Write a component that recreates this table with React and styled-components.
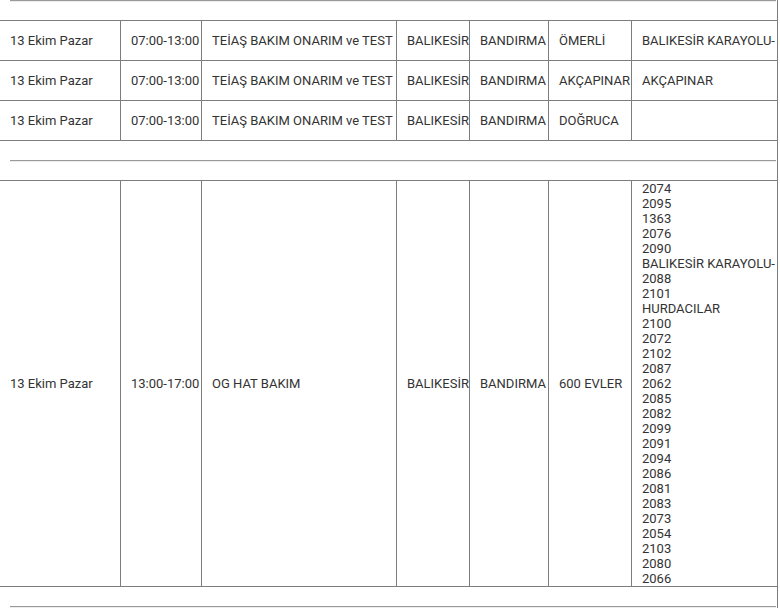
import React from "react";
import styled, { createGlobalStyle } from "styled-components";

const GlobalStyle = createGlobalStyle`
  html, body {
    margin: 0;
    padding: 0;
    background: #fff;
  }
  body {
    font-family: Roboto, "Liberation Sans", Arial, sans-serif;
    overflow: hidden;
  }
`;

const Page = styled.div`
  width: 780px;
  height: 608px;
  overflow: hidden;
`;

const Table = styled.table`
  border-collapse: collapse;
  table-layout: fixed;
  width: 779px;
  margin: -20px 0 0 -1px;
  font-size: 13px;
  line-height: 15px;
  color: #333;
`;

const Row = styled.tr`
  height: ${(p) => (p.$tall ? "auto" : "40px")};
`;

const Cell = styled.td`
  border: 1px solid #7d7d7d;
  padding: 0 0 0 10px;
  vertical-align: middle;
  white-space: nowrap;
  overflow: visible;
`;

const SpacerCell = styled.td`
  border: 1px solid #7d7d7d;
  padding: 0 1px 0 10px;
  height: 39px;
  vertical-align: middle;
`;

const Divider = styled.div`
  height: 0;
  border-top: 1px solid #9a9a9a;
  border-bottom: 1px solid #ececec;
`;

const Lines = styled.div`
  display: flex;
  flex-direction: column;
`;

const widths = [121, 81, 195, 73, 79, 83, 146];

const rows = [
  ["13 Ekim Pazar", "07:00-13:00", "TEİAŞ BAKIM ONARIM ve TEST", "BALIKESİR", "BANDIRMA", "ÖMERLİ", "BALIKESİR KARAYOLU-"],
  ["13 Ekim Pazar", "07:00-13:00", "TEİAŞ BAKIM ONARIM ve TEST", "BALIKESİR", "BANDIRMA", "AKÇAPINAR", "AKÇAPINAR"],
  ["13 Ekim Pazar", "07:00-13:00", "TEİAŞ BAKIM ONARIM ve TEST", "BALIKESİR", "BANDIRMA", "DOĞRUCA", ""],
];

const streets = [
  "2074", "2095", "1363", "2076", "2090", "BALIKESİR KARAYOLU-", "2088", "2101",
  "HURDACILAR", "2100", "2072", "2102", "2087", "2062", "2085", "2082", "2099",
  "2091", "2094", "2086", "2081", "2083", "2073", "2054", "2103", "2080", "2066",
];

const Spacer = () => (
  <Row>
    <SpacerCell colSpan={7}>
      <Divider />
    </SpacerCell>
  </Row>
);

export default function App() {
  return (
    <Page>
      <GlobalStyle />
      <Table>
        <colgroup>
          {widths.map((w, i) => (
            <col key={i} style={{ width: w }} />
          ))}
        </colgroup>
        <tbody>
          <Spacer />
          {rows.map((r, i) => (
            <Row key={i}>
              {r.map((c, j) => (
                <Cell key={j}>{c}</Cell>
              ))}
            </Row>
          ))}
          <Spacer />
          <Row $tall>
            <Cell>13 Ekim Pazar</Cell>
            <Cell>13:00-17:00</Cell>
            <Cell>OG HAT BAKIM</Cell>
            <Cell>BALIKESİR</Cell>
            <Cell>BANDIRMA</Cell>
            <Cell>600 EVLER</Cell>
            <Cell>
              <Lines>
                {streets.map((s, i) => (
                  <span key={i}>{s}</span>
                ))}
              </Lines>
            </Cell>
          </Row>
          <Spacer />
        </tbody>
      </Table>
    </Page>
  );
}
